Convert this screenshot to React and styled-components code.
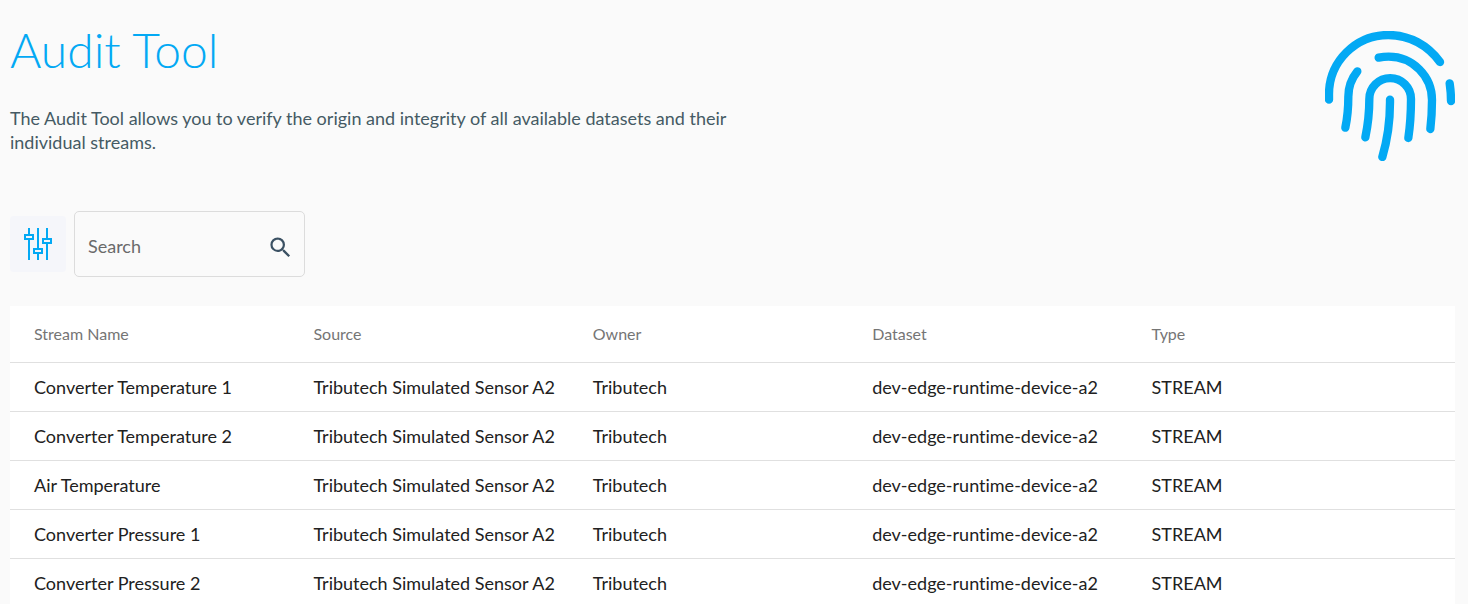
import React from "react";
import styled, { createGlobalStyle } from "styled-components";

const GlobalStyle = createGlobalStyle`
  * { box-sizing: border-box; }
  body {
    margin: 0;
    background: #fafafa;
    color: #455a64;
    font-family: Lato, "Liberation Sans", sans-serif;
    font-variant-ligatures: none;
  }
`;

const Page = styled.main`
  padding: 20px 13px 0 10px;
  height: 100vh;
  overflow: hidden;
`;

const Header = styled.header`
  display: flex;
  justify-content: space-between;
  align-items: flex-start;
`;

const Intro = styled.div`
  max-width: 720px;
`;

const Title = styled.h1`
  margin: 0 0 26px;
  color: #03a9f4;
  font-size: 48px;
  font-weight: 300;
  line-height: 60px;
`;

const Lead = styled.p`
  margin: 0;
  font-size: 18px;
  line-height: 24px;
`;

const Fingerprint = styled.svg`
  flex: none;
  width: 130px;
  height: 130px;
  margin-top: 11px;
  fill: none;
  stroke: #03a9f4;
  stroke-width: 25;
  stroke-linecap: round;
`;

const Toolbar = styled.div`
  display: flex;
  align-items: center;
  gap: 8px;
  margin: 50px 0 29px;
`;

const FilterButton = styled.button`
  display: grid;
  place-items: center;
  width: 56px;
  height: 56px;
  padding: 0;
  border: 0;
  border-radius: 4px;
  background: #f5f6fa;
`;

const FilterIcon = styled.svg`
  width: 28px;
  height: 32px;
  fill: none;
  stroke: #03a9f4;
  stroke-width: 2;
`;

const SearchField = styled.label`
  display: flex;
  align-items: center;
  width: 231px;
  height: 66px;
  padding: 3px 10px 0 13px;
  border: 1px solid #dcdcdc;
  border-radius: 5px;
`;

const SearchInput = styled.input`
  flex: 1;
  min-width: 0;
  padding: 0;
  border: 0;
  outline: 0;
  background: transparent;
  color: #455a64;
  font: inherit;
  font-size: 18px;
  line-height: 24px;
  &::placeholder { color: #6a6a6a; opacity: 1; }
`;

const SearchIcon = styled.svg`
  flex: none;
  width: 27px;
  height: 27px;
  margin-top: 3px;
  fill: #3b5163;
`;

const Table = styled.table`
  width: 100%;
  table-layout: fixed;
  border-collapse: separate;
  border-spacing: 0;
  background: #fff;
  text-align: left;
`;

const EdgeColumn = styled.col`
  width: 21%;
`;

const HeadCell = styled.th`
  height: 57px;
  padding: 0 0 2px;
  border-bottom: 1px solid #e0e0e0;
  color: #757575;
  font-size: 16px;
  font-weight: 400;
  &:first-child { padding-left: 24px; }
`;

const Cell = styled.td`
  height: 49px;
  padding: 0;
  border-bottom: 1px solid #e0e0e0;
  color: #212121;
  font-size: 18px;
  white-space: nowrap;
  &:first-child { padding-left: 24px; }
`;

const columns = ["Stream Name", "Source", "Owner", "Dataset", "Type"];

const streams = [
  "Converter Temperature 1",
  "Converter Temperature 2",
  "Air Temperature",
  "Converter Pressure 1",
  "Converter Pressure 2",
].map((name) => ({
  name,
  source: "Tributech Simulated Sensor A2",
  owner: "Tributech",
  dataset: "dev-edge-runtime-device-a2",
  type: "STREAM",
}));

export default function App() {
  return (
    <Page>
      <GlobalStyle />
      <Header>
        <Intro>
          <Title>Audit Tool</Title>
          <Lead>
            The Audit Tool allows you to verify the origin and integrity of all
            available datasets and their individual streams.
          </Lead>
        </Intro>
        <Fingerprint viewBox="45 48 390 390" aria-hidden="true">
          <path d="M57 254V238A178 178 0 0 1 235 60C299 60 354 91 390 141" />
          <path d="M419 205Q423 232 423 258" />
          <path d="M206 128Q221 125 236 125A130 130 0 0 1 366 255Q366 300 361 342" />
          <path d="M142 169Q115 202 115 245Q115 295 106 338" />
          <path d="M166 367Q178 310 178 252A62 62 0 0 1 303 252Q303 315 295 369" />
          <path d="M240 254Q241 345 217 426" />
        </Fingerprint>
      </Header>
      <Toolbar>
        <FilterButton type="button" aria-label="Filters">
          <FilterIcon viewBox="0 0 28 32" aria-hidden="true">
            <path d="M5 0V6M5 12V32M14 0V20M14 26V32M23 0V10M23 16V32" />
            <path d="M1 7H9V11H1ZM10 21H18V25H10ZM19 11H27V15H19Z" />
          </FilterIcon>
        </FilterButton>
        <SearchField>
          <SearchInput type="text" placeholder="Search" aria-label="Search" />
          <SearchIcon viewBox="0 0 24 24" aria-hidden="true">
            <path d="M15.5 14h-.79l-.28-.27A6.471 6.471 0 0 0 16 9.5 6.5 6.5 0 1 0 9.5 16c1.61 0 3.09-.59 4.23-1.57l.27.28v.79l5 4.99L20.49 19l-4.99-5zm-6 0C7.01 14 5 11.99 5 9.5S7.01 5 9.5 5 14 7.01 14 9.5 11.99 14 9.5 14z" />
          </SearchIcon>
        </SearchField>
      </Toolbar>
      <Table>
        <colgroup>
          <EdgeColumn />
          <col />
          <col />
          <col />
          <EdgeColumn />
        </colgroup>
        <thead>
          <tr>
            {columns.map((label) => (
              <HeadCell key={label} scope="col">{label}</HeadCell>
            ))}
          </tr>
        </thead>
        <tbody>
          {streams.map((stream) => (
            <tr key={stream.name}>
              <Cell>{stream.name}</Cell>
              <Cell>{stream.source}</Cell>
              <Cell>{stream.owner}</Cell>
              <Cell>{stream.dataset}</Cell>
              <Cell>{stream.type}</Cell>
            </tr>
          ))}
        </tbody>
      </Table>
    </Page>
  );
}
